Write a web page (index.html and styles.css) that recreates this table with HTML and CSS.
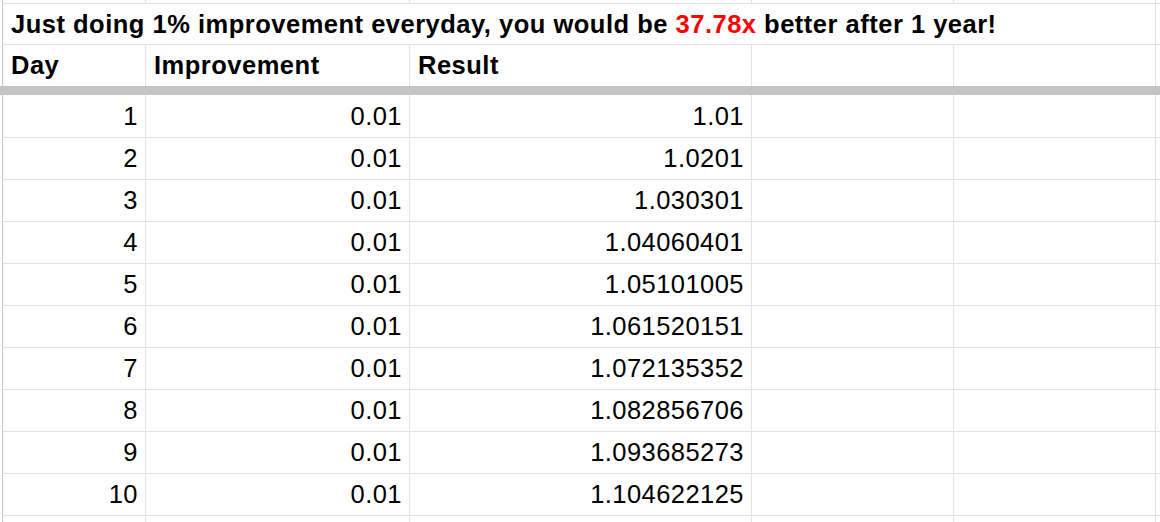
FILE: index.html
```html
<!DOCTYPE html>
<html>
<head>
<meta charset="utf-8">
<link rel="stylesheet" href="styles.css">
</head>
<body>
<div class="sheet">
  <div class="row stub">
    <div class="cell"></div><div class="cell"></div><div class="cell"></div><div class="cell"></div><div class="cell"></div><div class="cell"></div>
  </div>
  <div class="row title-row">
    <div class="cell title"><span>Just doing 1% improvement everyday, you would be <span class="red">37.78x</span> better after 1 year!</span></div>
    <div class="cell"></div>
  </div>
  <div class="row head">
    <div class="cell">Day</div><div class="cell">Improvement</div><div class="cell">Result</div><div class="cell"></div><div class="cell"></div><div class="cell"></div>
  </div>
  <div class="freeze"></div>
  <div class="row data first"><div class="cell num">1</div><div class="cell num">0.01</div><div class="cell num">1.01</div><div class="cell"></div><div class="cell"></div><div class="cell"></div></div>
  <div class="row data"><div class="cell num">2</div><div class="cell num">0.01</div><div class="cell num">1.0201</div><div class="cell"></div><div class="cell"></div><div class="cell"></div></div>
  <div class="row data"><div class="cell num">3</div><div class="cell num">0.01</div><div class="cell num">1.030301</div><div class="cell"></div><div class="cell"></div><div class="cell"></div></div>
  <div class="row data"><div class="cell num">4</div><div class="cell num">0.01</div><div class="cell num">1.04060401</div><div class="cell"></div><div class="cell"></div><div class="cell"></div></div>
  <div class="row data"><div class="cell num">5</div><div class="cell num">0.01</div><div class="cell num">1.05101005</div><div class="cell"></div><div class="cell"></div><div class="cell"></div></div>
  <div class="row data"><div class="cell num">6</div><div class="cell num">0.01</div><div class="cell num">1.061520151</div><div class="cell"></div><div class="cell"></div><div class="cell"></div></div>
  <div class="row data"><div class="cell num">7</div><div class="cell num">0.01</div><div class="cell num">1.072135352</div><div class="cell"></div><div class="cell"></div><div class="cell"></div></div>
  <div class="row data"><div class="cell num">8</div><div class="cell num">0.01</div><div class="cell num">1.082856706</div><div class="cell"></div><div class="cell"></div><div class="cell"></div></div>
  <div class="row data"><div class="cell num">9</div><div class="cell num">0.01</div><div class="cell num">1.093685273</div><div class="cell"></div><div class="cell"></div><div class="cell"></div></div>
  <div class="row data"><div class="cell num">10</div><div class="cell num">0.01</div><div class="cell num">1.104622125</div><div class="cell"></div><div class="cell"></div><div class="cell"></div></div>
  <div class="row data"><div class="cell"></div><div class="cell"></div><div class="cell"></div><div class="cell"></div><div class="cell"></div><div class="cell"></div></div>
</div>
</body>
</html>
```

FILE: styles.css
```css
html, body {
  margin: 0;
  padding: 0;
  background: #ffffff;
  overflow: hidden;
}

body {
  width: 1160px;
  height: 522px;
  font-family: "Liberation Sans", Arial, sans-serif;
  font-size: 25.5px;
  letter-spacing: 0.45px;
  color: #000000;
}

.sheet {
  display: flex;
  flex-direction: column;
  height: 522px;
  overflow: hidden;
}

.row {
  display: grid;
  grid-template-columns: 143px 264px 342px 202px 202px 1fr;
  margin-left: 2px;
  border-left: 1px solid #c6c6c6;
  flex: none;
}

.cell {
  box-sizing: border-box;
  border-right: 1px solid #e2e2e2;
  border-bottom: 1px solid #e2e2e2;
  display: flex;
  align-items: center;
  padding: 0 7px 0 8px;
  white-space: nowrap;
}

.stub .cell {
  height: 4px;
}

.title-row .cell {
  height: 41px;
}

.title {
  grid-column: span 5;
  font-weight: bold;
  letter-spacing: 0.5px;
}

.red {
  color: #ff0000;
}

.head .cell {
  height: 41px;
  font-weight: bold;
  letter-spacing: 0.5px;
  border-bottom: none;
}

.freeze {
  height: 9px;
  background: #c4c4c4;
  flex: none;
}

.data .cell {
  height: 42px;
}

.data.first .cell {
  height: 43px;
}

.num {
  justify-content: flex-end;
}
```
